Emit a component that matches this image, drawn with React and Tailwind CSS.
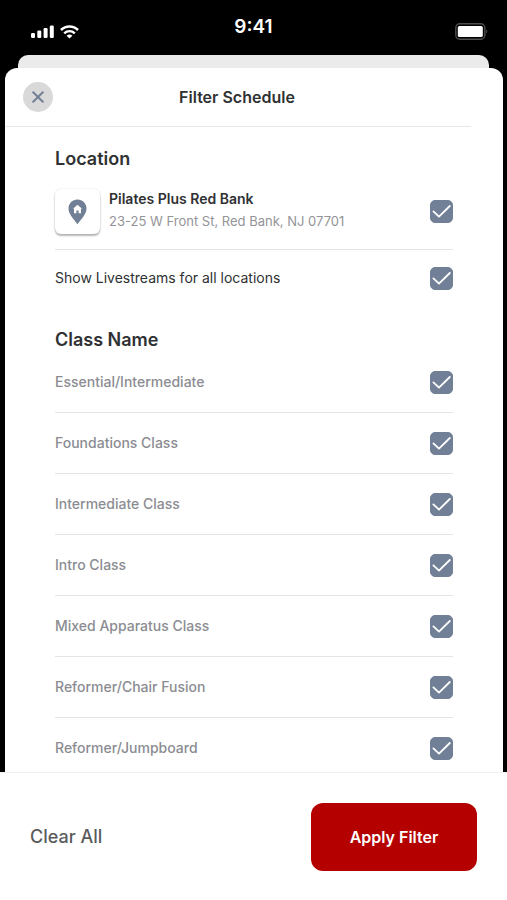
import { useState } from "react";

const classNames = [
  "Essential/Intermediate",
  "Foundations Class",
  "Intermediate Class",
  "Intro Class",
  "Mixed Apparatus Class",
  "Reformer/Chair Fusion",
  "Reformer/Jumpboard",
];

const allFilters = ["red-bank", "livestreams", ...classNames];

function StatusBar() {
  return (
    <div className="grid h-[55px] shrink-0 grid-cols-3 items-center px-[19px] text-white">
      <div className="flex items-center gap-[6px] pl-3 pt-2">
        <svg width="23" height="13" viewBox="0 0 23 13" fill="currentColor">
          <rect x="0" y="8" width="4" height="5" rx="1.2" />
          <rect x="6.3" y="5.6" width="4" height="7.4" rx="1.2" />
          <rect x="12.6" y="3" width="4" height="10" rx="1.2" />
          <rect x="18.8" y="0.5" width="4" height="12.5" rx="1.2" />
        </svg>
        <svg width="19" height="14" viewBox="0 0 19 14" fill="none" stroke="currentColor">
          <path d="M1 5a12 12 0 0 1 17 0" strokeWidth="2.6" />
          <path d="M4.2 8.3a7.6 7.6 0 0 1 10.6 0" strokeWidth="2.4" />
          <path d="M9.5 13.6 6.6 10.8a4.2 4.2 0 0 1 5.8 0Z" fill="currentColor" stroke="none" />
        </svg>
      </div>
      <p className="text-center text-[19px] font-semibold">9:41</p>
      <div className="flex justify-end pt-2">
        <svg width="33" height="17" viewBox="0 0 33 17">
          <rect x="0.8" y="0.8" width="29" height="15.4" rx="4" fill="none" stroke="#4d4d4d" strokeWidth="1.4" />
          <rect x="2.8" y="3" width="25" height="11" rx="1.6" fill="#fff" />
          <path d="M31.2 6.6c1.5.6 1.5 3.4 0 4Z" fill="#4d4d4d" />
        </svg>
      </div>
    </div>
  );
}

function Checkbox({ id, checked, onChange }) {
  return (
    <span className="grid size-[23px] shrink-0">
      <input
        id={id}
        type="checkbox"
        checked={checked}
        onChange={onChange}
        className="col-start-1 row-start-1 size-[23px] cursor-pointer appearance-none rounded-[5px] border border-[#718096] checked:bg-[#718096]"
      />
      {checked && (
        <svg
          viewBox="0 0 23 23"
          fill="none"
          stroke="#fff"
          strokeWidth="1.8"
          strokeLinecap="round"
          strokeLinejoin="round"
          className="pointer-events-none col-start-1 row-start-1 size-[23px]"
        >
          <path d="M3.4 11.4 9 16.6 19.8 6" />
        </svg>
      )}
    </span>
  );
}

function App() {
  const [selected, setSelected] = useState(allFilters);

  const toggle = (name) => {
    setSelected(
      selected.includes(name)
        ? selected.filter((item) => item !== name)
        : [...selected, name]
    );
  };

  return (
    <div className="flex h-screen flex-col bg-black font-['Inter',sans-serif] text-[#2f3133]">
      <StatusBar />
      <div className="mx-[18px] h-[13px] shrink-0 rounded-t-[10px] bg-[#ebebeb]" />

      <main className="ml-[5px] mr-1 flex min-h-0 flex-1 flex-col overflow-hidden rounded-t-xl bg-white">
        <header className="shrink-0 pr-8">
          <div className="grid h-[59px] grid-cols-[30px_1fr_50px] items-center border-b border-[#e8e8e8] pl-[18px]">
            <button
              type="button"
              aria-label="Close"
              className="flex size-[30px] cursor-pointer items-center justify-center rounded-full bg-[#d9d9d9] text-[#718096]"
            >
              <svg width="12" height="12" viewBox="0 0 12 12" stroke="currentColor" strokeWidth="2" strokeLinecap="round">
                <path d="M1.2 1.2 10.8 10.8M10.8 1.2 1.2 10.8" />
              </svg>
            </button>
            <h1 className="text-center text-base font-semibold">Filter Schedule</h1>
          </div>
        </header>

        <div className="min-h-0 flex-1 overflow-y-auto px-[50px] pt-5 [scrollbar-width:none]">
          <h2 className="text-lg font-semibold leading-6">Location</h2>
          <div className="flex items-start border-b border-[#e4e4e4] pb-[15px] pt-[18px]">
            <div className="flex size-[45px] shrink-0 items-center justify-center rounded-md bg-white shadow-[0_2px_2px_rgba(0,0,0,0.28),0_0_2px_rgba(0,0,0,0.14)]">
              <svg width="19" height="26" viewBox="0 0 19 26">
                <path d="M9.5.5C4.400.5.5 4.400.5 9.400c0 5.800 5.600 11 9 15.800 3.400-4.800 9-10 9-15.800C18.500 4.400 14.600.5 9.500.5Z" fill="#718096" />
                <path d="M9.500 5.800 5 9.800h1v4.400h2.400v-2.600h2.200v2.600H13V9.800h1Z" fill="#fff" />
              </svg>
            </div>
            <label htmlFor="red-bank" className="ml-[9px] flex-1 cursor-pointer">
              <span className="block text-sm font-semibold leading-[20px]">Pilates Plus Red Bank</span>
              <span className="block text-[13px] leading-[24px] text-[#939498]">
                23-25 W Front St, Red Bank, NJ 07701
              </span>
            </label>
            <div className="flex h-[45px] items-center">
              <Checkbox
                id="red-bank"
                checked={selected.includes("red-bank")}
                onChange={() => toggle("red-bank")}
              />
            </div>
          </div>
          <div className="flex h-14 items-center justify-between">
            <label htmlFor="livestreams" className="cursor-pointer text-sm">
              Show Livestreams for all locations
            </label>
            <Checkbox
              id="livestreams"
              checked={selected.includes("livestreams")}
              onChange={() => toggle("livestreams")}
            />
          </div>

          <h2 className="mt-[22px] text-lg font-semibold leading-6">Class Name</h2>
          <ul>
            {classNames.map((name) => (
              <li
                key={name}
                className="flex h-[61px] items-center justify-between border-b border-[#e4e4e4]"
              >
                <label htmlFor={name} className="cursor-pointer text-sm font-medium text-[#8b8c92]">
                  {name}
                </label>
                <Checkbox
                  id={name}
                  checked={selected.includes(name)}
                  onChange={() => toggle(name)}
                />
              </li>
            ))}
          </ul>
        </div>
      </main>

      <footer className="flex h-32 shrink-0 items-center justify-between border-t border-[#efefef] bg-white px-[30px]">
        <button
          type="button"
          onClick={() => setSelected([])}
          className="cursor-pointer text-lg font-medium text-[#5a5b5d]"
        >
          Clear All
        </button>
        <button
          type="button"
          className="h-[68px] w-[166px] cursor-pointer rounded-xl bg-[#b50000] text-base font-semibold text-white"
        >
          Apply Filter
        </button>
      </footer>
    </div>
  );
}

export default App;
